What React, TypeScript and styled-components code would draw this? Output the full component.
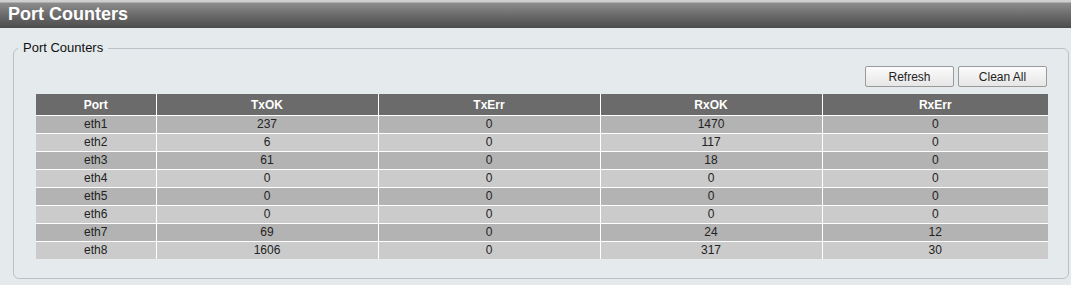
import React from 'react';
import styled, { createGlobalStyle } from 'styled-components';

const GlobalStyle = createGlobalStyle`
  body {
    margin: 0;
    background: #e5eaec;
    font-family: 'Liberation Sans', Arial, sans-serif;
  }
`;

type PortRow = {
  port: string;
  txOk: number;
  txErr: number;
  rxOk: number;
  rxErr: number;
};

const rows: PortRow[] = [
  { port: 'eth1', txOk: 237, txErr: 0, rxOk: 1470, rxErr: 0 },
  { port: 'eth2', txOk: 6, txErr: 0, rxOk: 117, rxErr: 0 },
  { port: 'eth3', txOk: 61, txErr: 0, rxOk: 18, rxErr: 0 },
  { port: 'eth4', txOk: 0, txErr: 0, rxOk: 0, rxErr: 0 },
  { port: 'eth5', txOk: 0, txErr: 0, rxOk: 0, rxErr: 0 },
  { port: 'eth6', txOk: 0, txErr: 0, rxOk: 0, rxErr: 0 },
  { port: 'eth7', txOk: 69, txErr: 0, rxOk: 24, rxErr: 12 },
  { port: 'eth8', txOk: 1606, txErr: 0, rxOk: 317, rxErr: 30 },
];

const Page = () => {
  return (
    <>
      <GlobalStyle />
      <TitleBar>Port Counters</TitleBar>
      <Box>
        <Legend>Port Counters</Legend>
        <BoxBody>
          <Toolbar>
            <Btn type="button">Refresh</Btn>
            <Btn type="button">Clean All</Btn>
          </Toolbar>
          <Table>
            <colgroup>
              <col style={{ width: 120 }} />
              <col style={{ width: 222 }} />
              <col style={{ width: 222 }} />
              <col style={{ width: 222 }} />
              <col />
            </colgroup>
            <thead>
              <tr>
                <Th>Port</Th>
                <Th>TxOK</Th>
                <Th>TxErr</Th>
                <Th>RxOK</Th>
                <Th>RxErr</Th>
              </tr>
            </thead>
            <tbody>
              {rows.map((r, i) => (
                <Row key={r.port} $odd={i % 2 === 0}>
                  <Td>{r.port}</Td>
                  <Td>{r.txOk}</Td>
                  <Td>{r.txErr}</Td>
                  <Td>{r.rxOk}</Td>
                  <Td>{r.rxErr}</Td>
                </Row>
              ))}
            </tbody>
          </Table>
        </BoxBody>
      </Box>
    </>
  );
};

export default Page;

// 상단 제목 바
const TitleBar = styled.div`
  height: 28px;
  box-sizing: border-box;
  padding: 3px 0 0 8px;
  background: linear-gradient(
    to bottom,
    #cfcfcf 0,
    #cfcfcf 2px,
    #8c8c8c 3px,
    #6a6a6a 55%,
    #4c4c4c 100%
  );
  color: #fff;
  font-size: 18px;
  font-weight: bold;
  line-height: 22px;
`;

const Box = styled.fieldset`
  margin: 13px 2px 0 13px;
  padding: 0;
  border: 1px solid #b9c2c6;
  border-radius: 6px;
  min-width: 0;
`;

const Legend = styled.legend`
  margin-left: 4px;
  padding: 0 5px;
  font-size: 13px;
  line-height: 14px;
  color: #111;
`;

const BoxBody = styled.div`
  padding: 11px 20px 19px 22px;
`;

const Toolbar = styled.div`
  display: flex;
  justify-content: flex-end;
  gap: 4px;
  margin-bottom: 7px;
  padding-right: 1px;
`;

const Btn = styled.button`
  width: 89px;
  height: 21px;
  padding: 0;
  border: 1px solid #9a9a9a;
  border-radius: 2px;
  background: linear-gradient(to bottom, #fbfbfb, #e6e6e6);
  font-family: 'Liberation Sans', Arial, sans-serif;
  font-size: 12px;
  color: #222;
  cursor: pointer;
`;

const Table = styled.table`
  width: 100%;
  border-collapse: collapse;
  border-style: hidden;
  table-layout: fixed;
  font-size: 12px;
`;

const Th = styled.th`
  height: 21px;
  padding: 0;
  border: 1px solid #fff;
  background: #6b6b6b;
  color: #fff;
  font-weight: bold;
  text-align: center;
`;

const Row = styled.tr<{ $odd: boolean }>`
  background: ${(p) => (p.$odd ? '#b3b3b3' : '#cbcbcb')};
`;

const Td = styled.td`
  height: 17px;
  padding: 0;
  border: 1px solid #fff;
  color: #222;
  text-align: center;
  line-height: 17px;
`;
